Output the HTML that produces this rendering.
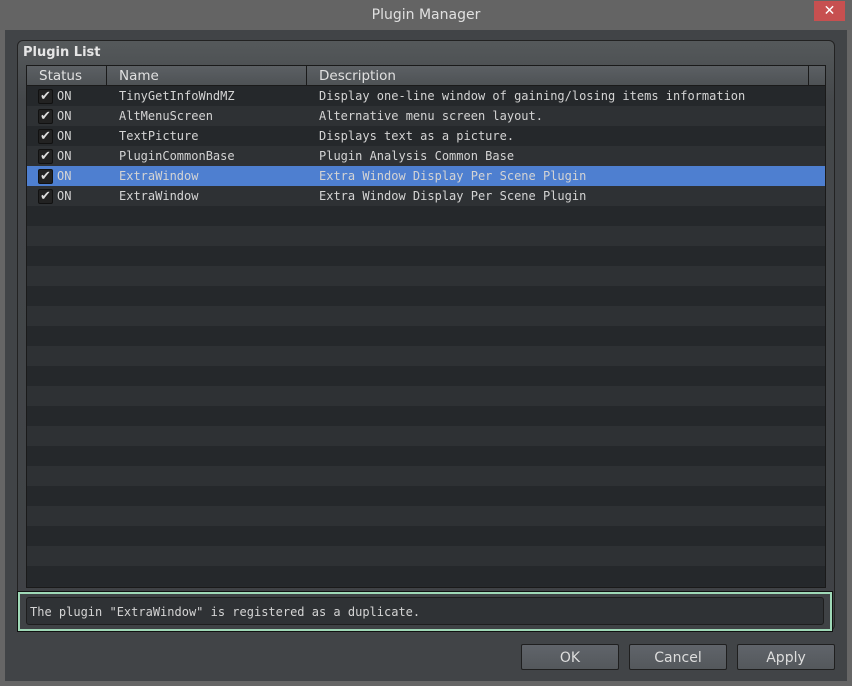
<!DOCTYPE html><html><head><style>
*{margin:0;padding:0;box-sizing:border-box}
body{width:852px;height:686px;background:#666;position:relative;overflow:hidden;font-family:"DejaVu Sans","Liberation Sans",sans-serif}
.a{position:absolute}
.title{left:0;top:0;width:852px;height:30px;background:#646464;color:#e0e0e0;font-size:14px;text-align:center;line-height:31px}
.close{left:814px;top:1px;width:31px;height:20px;background:#c75050;color:#fff;font-size:14px;font-weight:bold;text-align:center;line-height:20px}
.body{left:5px;top:30px;width:842px;height:651px;background:#414447}
.grp{left:17px;top:40px;width:818px;height:591px;border:1px solid #222;border-radius:6px;background:linear-gradient(#55595b,#45484b 10%,#3f4245)}
.gl{left:23px;top:45px;color:#e6e6e6;font-size:13px;font-weight:bold}
.tbl{left:26px;top:65px;width:800px;height:523px;border:1px solid #1a1a1a;background:#26292c}
.hdr{left:0;top:0;width:798px;height:20px;background:linear-gradient(#5c6064,#4e5255);border-bottom:1px solid #1a1a1a;color:#e0e0e0;font-size:13.5px;line-height:21px}
.row{position:absolute;left:0;width:798px;height:20px;font-family:"DejaVu Sans Mono","Liberation Mono",monospace;font-size:12px;color:#d4d4d4;line-height:20px}
.cb{position:absolute;left:11px;top:3px;width:15px;height:15px;background:#222;border:1px solid #111;border-radius:2px;color:#ddd;font-size:13px;line-height:14px;text-align:center;font-family:"DejaVu Sans",sans-serif}
.msg{left:18px;top:592px;width:814px;height:39px;border:2px solid #9fd9b7;outline:1px solid #111;background:#3f4245}
.mi{left:6px;top:3px;width:798px;height:28px;background:#2f3235;border:1px solid #1e1e1e;border-radius:3px;color:#d4d4d4;font-family:"DejaVu Sans Mono",monospace;font-size:12px;line-height:28px;padding-left:3px}
.btn{top:644px;width:98px;height:26px;background:linear-gradient(#60646a,#54585c);border:1px solid #1f1f1f;border-radius:2px;color:#ddd;font-size:14px;text-align:center;line-height:26px}
</style></head><body>
<div class="a title">Plugin Manager</div>
<div class="a close">✕</div>
<div class="a body"></div>
<div class="a grp"></div>
<div class="a gl">Plugin List</div>
<div class="a tbl">
<div class="a hdr">
<span class="a" style="left:12px">Status</span>
<span class="a" style="left:79px;top:0;height:20px;border-left:1px solid #1a1a1a"></span>
<span class="a" style="left:92px">Name</span>
<span class="a" style="left:279px;top:0;height:20px;border-left:1px solid #1a1a1a"></span>
<span class="a" style="left:292px">Description</span>
<span class="a" style="left:781px;top:0;height:20px;border-left:1px solid #1a1a1a"></span>
</div>
<div id="rows"></div>
</div>
<div class="a msg"><div class="a mi">The plugin "ExtraWindow" is registered as a duplicate.</div></div>
<div class="a btn" style="left:521px">OK</div>
<div class="a btn" style="left:629px">Cancel</div>
<div class="a btn" style="left:737px">Apply</div>
<script>
var d=[["TinyGetInfoWndMZ","Display one-line window of gaining/losing items information"],["AltMenuScreen","Alternative menu screen layout."],["TextPicture","Displays text as a picture."],["PluginCommonBase","Plugin Analysis Common Base"],["ExtraWindow","Extra Window Display Per Scene Plugin"],["ExtraWindow","Extra Window Display Per Scene Plugin"]];
var h="";
for(var i=0;i<25;i++){var t=20+i*20;var bg=i==4?"#4e7fd0":(i%2?"#2e3134":"#25282b");
h+='<div class="row" style="top:'+t+'px;background:'+bg+'">';
if(i<6)h+='<div class="cb">✔</div><span class="a" style="left:30px">ON</span><span class="a" style="left:92px">'+d[i][0]+'</span><span class="a" style="left:292px">'+d[i][1]+'</span>';
h+='</div>';}
document.getElementById("rows").innerHTML=h;
</script>
</body></html>
